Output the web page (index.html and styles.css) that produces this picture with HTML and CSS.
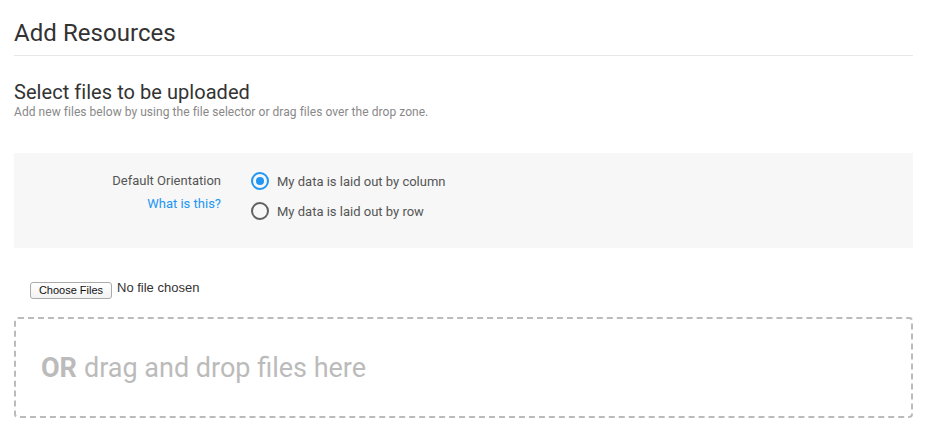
FILE: index.html
```html
<!DOCTYPE html>
<html>
<head>
<meta charset="utf-8">
<link rel="stylesheet" href="styles.css">
</head>
<body>
<div class="page">
  <h1 class="title">Add Resources</h1>
  <div class="section-head">
    <h2 class="subtitle">Select files to be uploaded</h2>
    <p class="hint">Add new files below by using the file selector or drag files over the drop zone.</p>
  </div>
  <div class="panel">
    <div class="label-col">
      <div class="label">Default Orientation</div>
      <a class="help" href="#">What is this?</a>
    </div>
    <div class="options">
      <label class="option"><span class="radio checked"></span>My data is laid out by column</label>
      <label class="option"><span class="radio"></span>My data is laid out by row</label>
    </div>
  </div>
  <div class="file-row">
    <span class="file-btn">Choose Files</span><span class="file-status">No file chosen</span>
  </div>
  <div class="dropzone"><b>OR</b> drag and drop files here</div>
</div>
</body>
</html>
```
FILE: styles.css
```css
* { box-sizing: border-box; }
html, body { margin: 0; padding: 0; background: #fff; }
body { font-family: Roboto, "Noto Sans", sans-serif; color: #333; }
.page { padding: 0 15px 0 14px; }
.title {
  margin: 0;
  padding-top: 18px;
  font-size: 24px;
  font-weight: 400;
  line-height: 30px;
  color: #333;
  height: 56px;
  border-bottom: 1px solid #e8e8e8;
  letter-spacing: 0.05px;
}
.section-head { padding-top: 24px; }
.subtitle {
  margin: 0;
  font-size: 20px;
  font-weight: 400;
  line-height: 24px;
  color: #333;
  letter-spacing: 0.05px;
}
.hint {
  margin: 1px 0 0;
  font-size: 12px;
  line-height: 14px;
  color: #888;
  letter-spacing: 0.05px;
}
.panel {
  margin-top: 34px;
  background: #f7f7f7;
  height: 95px;
  display: flex;
  padding-top: 20px;
}
.label-col {
  width: 207px;
  text-align: right;
  font-size: 13px;
  line-height: 16px;
  display: flex;
  flex-direction: column;
  gap: 7px;
}
.label { color: #555; }
.help { color: #2196f3; text-decoration: none; }
.options {
  margin-left: 30px;
  margin-top: -2px;
  display: flex;
  flex-direction: column;
  gap: 10px;
}
.option {
  display: flex;
  align-items: center;
  font-size: 13px;
  color: #555;
  height: 20px;
}
.radio {
  width: 18px;
  height: 18px;
  border: 2px solid #616161;
  border-radius: 50%;
  margin-right: 8px;
  position: relative;
  background: #fff0;
}
.radio.checked { border-color: #2196f3; }
.radio.checked::after {
  content: "";
  position: absolute;
  left: 3px; top: 3px;
  width: 8px; height: 8px;
  border-radius: 50%;
  background: #2196f3;
}
.file-row {
  margin-top: 34px;
  padding-left: 16px;
  display: flex;
  align-items: flex-start;
  height: 35px;
  font-family: "Liberation Sans", Arial, sans-serif;
}
.file-btn {
  display: inline-block;
  font-size: 11px;
  line-height: 15px;
  height: 17px;
  width: 82px;
  text-align: center;
  border: 1px solid #aaa;
  border-radius: 3px;
  background: linear-gradient(#fff, #f2f2f2);
  color: #111;
}
.file-status {
  margin-left: 5px;
  font-size: 13px;
  line-height: 12px;
  color: #333;
}
.dropzone {
  height: 101px;
  border: 2px dashed #bbb;
  border-radius: 4px;
  padding-left: 25px;
  display: flex;
  align-items: center;
  font-size: 27px;
  color: #bbb;
  gap: 7px;
}
.dropzone b { font-weight: 700; }
```
